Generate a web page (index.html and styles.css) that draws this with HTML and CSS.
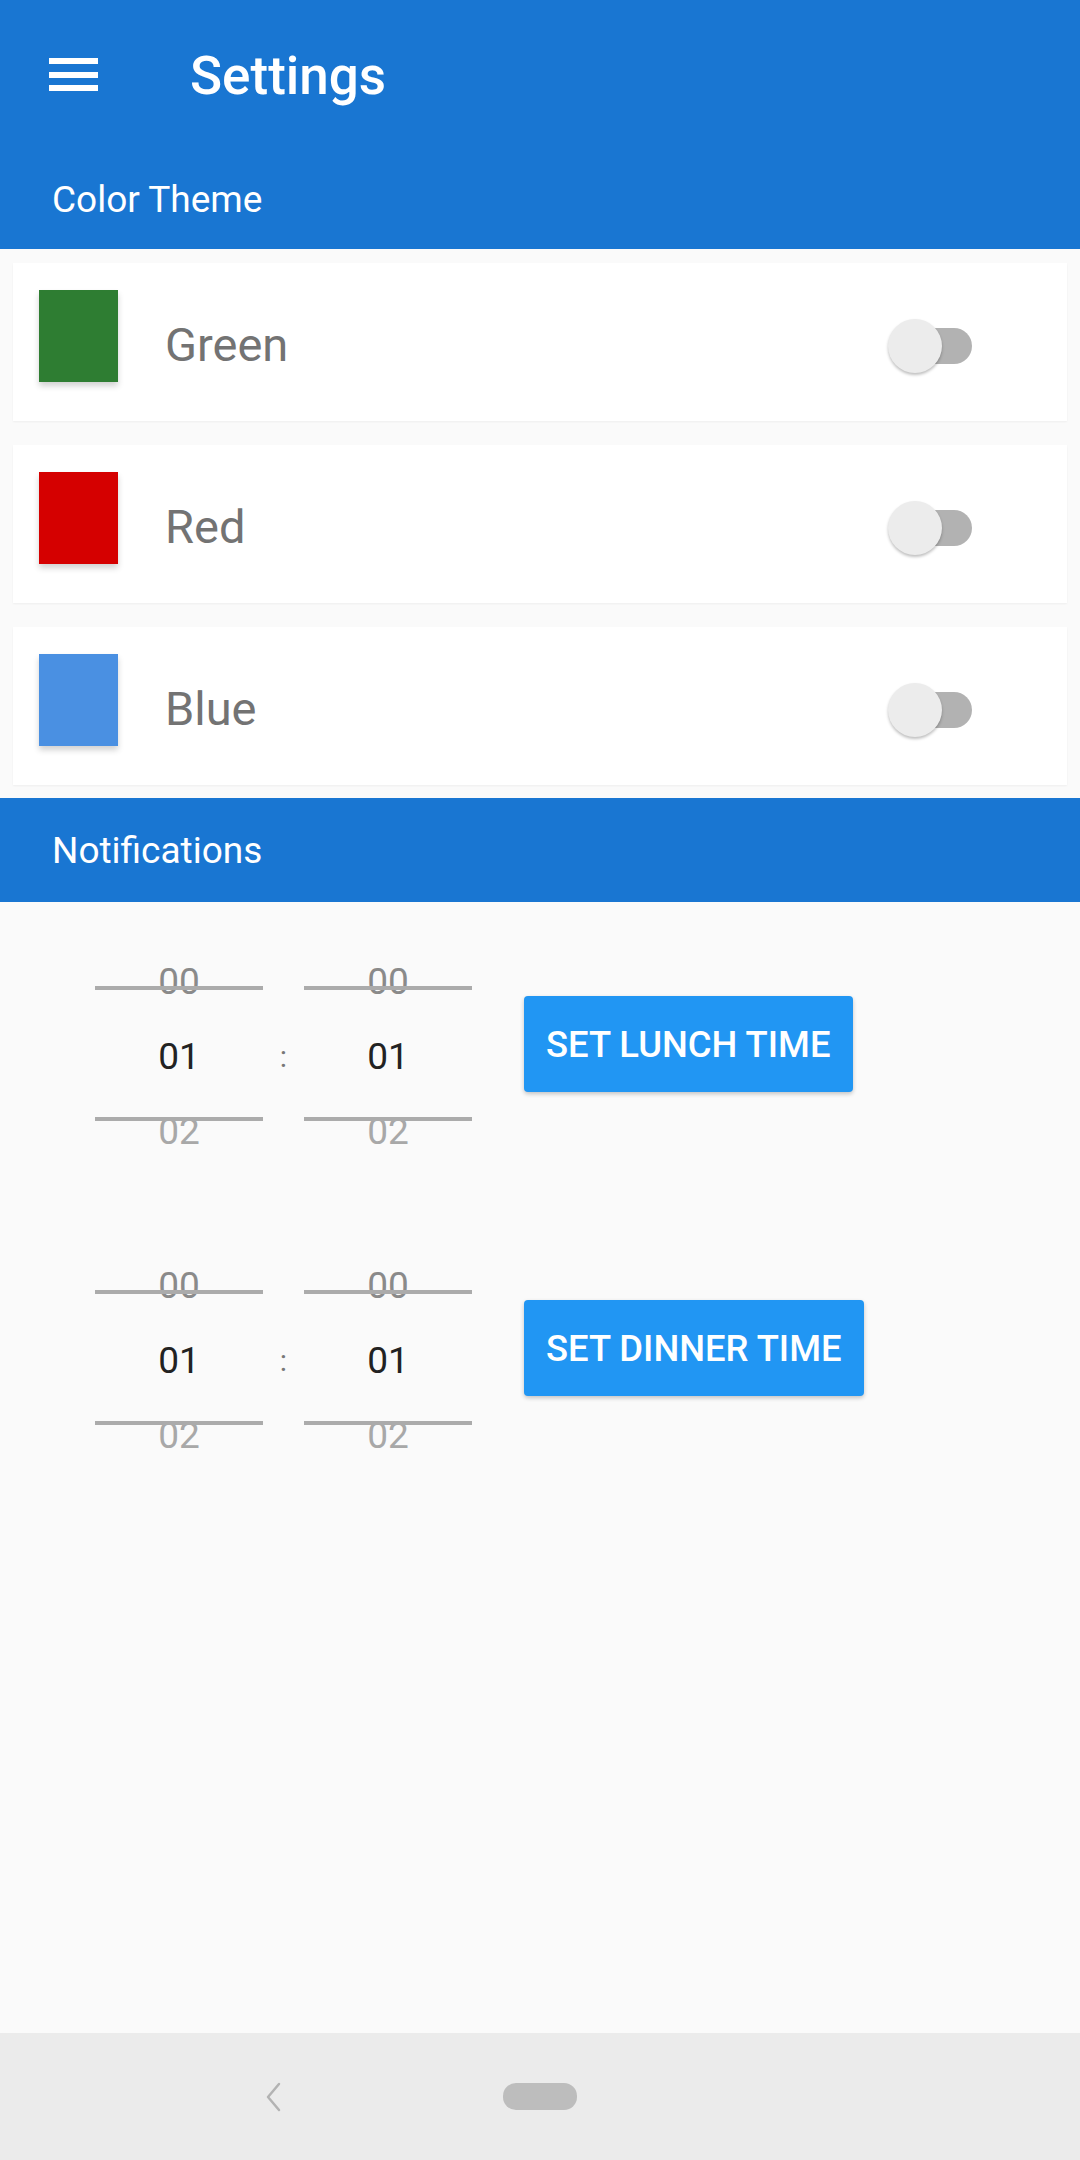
FILE: index.html
```html
<!DOCTYPE html>
<html lang="en">
<head>
<meta charset="utf-8">
<title>Settings</title>
<link rel="stylesheet" href="styles.css">
</head>
<body>
<div class="screen">
  <header class="appbar">
    <div class="menu-icon"><span></span><span></span><span></span></div>
    <h1 class="title">Settings</h1>
  </header>
  <div class="section-bar first">Color Theme</div>
  <div class="themes">
    <div class="card">
      <div class="swatch green"></div>
      <div class="label">Green</div>
      <div class="switch"><div class="thumb"></div></div>
    </div>
    <div class="card">
      <div class="swatch red"></div>
      <div class="label">Red</div>
      <div class="switch"><div class="thumb"></div></div>
    </div>
    <div class="card">
      <div class="swatch blue"></div>
      <div class="label">Blue</div>
      <div class="switch"><div class="thumb"></div></div>
    </div>
  </div>
  <div class="section-bar">Notifications</div>
  <main class="notif">
    <div class="time-row">
      <div class="picker">
        <div class="num prev">00</div>
        <div class="num cur">01</div>
        <div class="num next">02</div>
      </div>
      <div class="colon">:</div>
      <div class="picker">
        <div class="num prev">00</div>
        <div class="num cur">01</div>
        <div class="num next">02</div>
      </div>
      <button class="btn">SET LUNCH TIME</button>
    </div>
    <div class="time-row">
      <div class="picker">
        <div class="num prev">00</div>
        <div class="num cur">01</div>
        <div class="num next">02</div>
      </div>
      <div class="colon">:</div>
      <div class="picker">
        <div class="num prev">00</div>
        <div class="num cur">01</div>
        <div class="num next">02</div>
      </div>
      <button class="btn">SET DINNER TIME</button>
    </div>
  </main>
  <nav class="navbar">
    <svg class="back" width="18" height="30" viewBox="0 0 18 30"><path d="M15 2 L4 15 L15 28" fill="none" stroke="#b3b3b3" stroke-width="2.5" stroke-linecap="round" stroke-linejoin="round"/></svg>
    <div class="home-pill"></div>
  </nav>
</div>
</body>
</html>
```

FILE: styles.css
```css
* { box-sizing: border-box; }
html, body { margin: 0; padding: 0; }
body {
  width: 1080px;
  height: 2160px;
  background: #fafafa;
  font-family: Roboto, "Noto Sans", Arial, sans-serif;
}
.screen {
  width: 1080px;
  height: 2160px;
  display: flex;
  flex-direction: column;
}
.appbar {
  height: 147px;
  background: #1976d2;
  display: flex;
  align-items: center;
  padding-left: 49px;
}
.menu-icon {
  width: 49px;
  height: 33px;
  display: flex;
  flex-direction: column;
  justify-content: space-between;
  margin-top: 2px;
}
.menu-icon span {
  display: block;
  height: 6px;
  background: #fff;
}
.title {
  margin: 4px 0 0 92px;
  font-size: 53px;
  font-weight: 500;
  color: #fff;
}
.section-bar {
  height: 104px;
  background: #1976d2;
  color: #fff;
  font-size: 37px;
  display: flex;
  align-items: center;
  padding-left: 52px;
}
.section-bar.first {
  height: 102px;
  padding-top: 2px;
}
.themes {
  display: flex;
  flex-direction: column;
  gap: 24px;
  padding: 14px 13px 13px 13px;
}
.card {
  height: 158px;
  background: #fff;
  display: flex;
  align-items: center;
  padding-left: 26px;
  padding-right: 95px;
  box-shadow: 0 1px 2px rgba(0,0,0,0.05);
}
.swatch {
  width: 79px;
  height: 92px;
  align-self: flex-start;
  margin-top: 27px;
  box-shadow: 0 4px 6px rgba(0,0,0,0.18);
}
.green { background: #2e7d32; }
.red { background: #d50000; }
.blue { background: #4a90e2; }
.label {
  flex: 1;
  margin-left: 47px;
  font-size: 47px;
  color: #737373;
  padding-top: 4px;
}
.switch {
  position: relative;
  width: 84px;
  height: 54px;
  margin-top: 7px;
}
.switch::before {
  content: "";
  position: absolute;
  left: 4px;
  right: 0;
  top: 9px;
  height: 36px;
  border-radius: 18px;
  background: #b2b2b2;
}
.thumb {
  position: absolute;
  left: 0;
  top: 0;
  width: 54px;
  height: 54px;
  border-radius: 50%;
  background: #ececec;
  box-shadow: 0 2px 3px rgba(0,0,0,0.25);
}
.notif {
  flex: 1;
  display: flex;
  flex-direction: column;
  gap: 79px;
  padding: 42px 0 0 95px;
}
.time-row {
  display: flex;
  align-items: flex-start;
}
.picker {
  position: relative;
  width: 168px;
}
.picker::before,
.picker::after {
  content: "";
  position: absolute;
  left: 0;
  right: 0;
  height: 4px;
  background: #ababab;
}
.picker::before { top: 42px; }
.picker::after { top: 173px; }
.num {
  height: 75px;
  line-height: 75px;
  text-align: center;
  font-size: 37px;
}
.num.prev { color: #8a8a8a; }
.num.cur { color: #222; }
.num.next { color: #a8a8a8; }
.colon {
  width: 41px;
  height: 225px;
  line-height: 225px;
  text-align: center;
  font-size: 30px;
  color: #777;
}
.btn {
  margin: 52px 0 0 52px;
  height: 96px;
  padding: 0 22px;
  border: none;
  border-radius: 4px;
  background: #2196f3;
  color: #fff;
  font-family: Roboto, "Noto Sans", Arial, sans-serif;
  font-size: 36.4px;
  font-weight: 500;
  box-shadow: 0 2px 4px rgba(0,0,0,0.22);
}
.navbar {
  height: 127px;
  background: #ebebeb;
  display: flex;
  align-items: center;
  padding-left: 264px;
}
.back {
  display: block;
}
.home-pill {
  margin-left: 221px;
  width: 74px;
  height: 27px;
  border-radius: 13px;
  background: #bdbdbd;
}
```
